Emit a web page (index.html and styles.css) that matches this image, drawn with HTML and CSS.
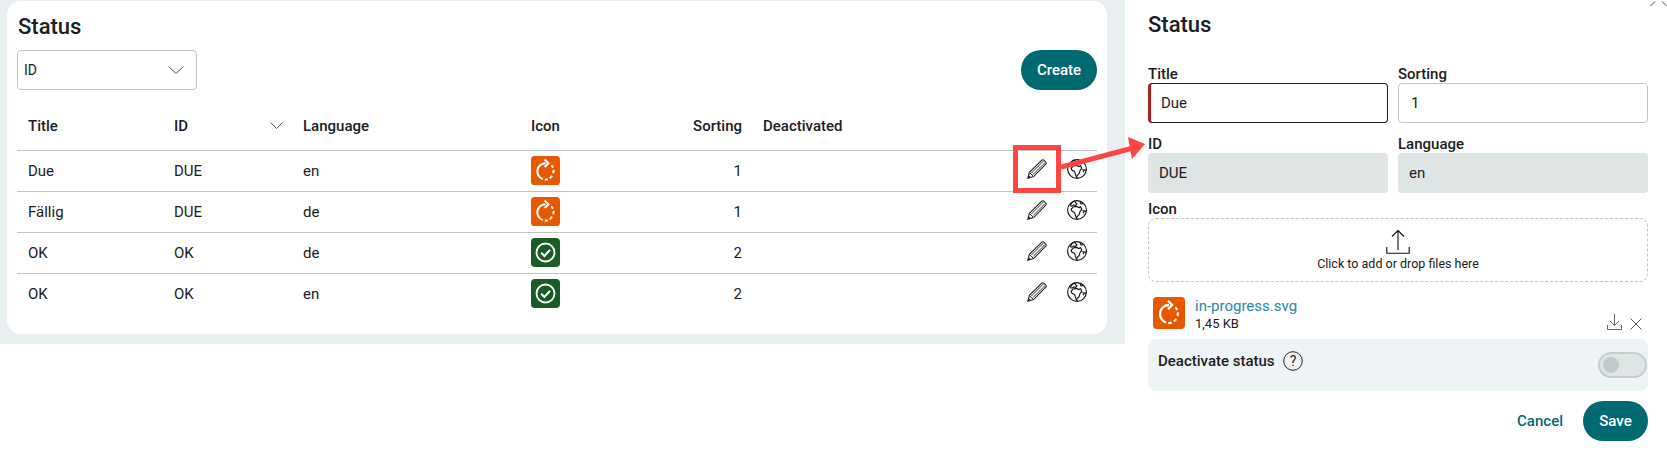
FILE: index.html
```html
<!DOCTYPE html>
<html lang="en">
<head>
<meta charset="utf-8">
<title>Status</title>
<link rel="stylesheet" href="styles.css">
</head>
<body>
<svg class="defs" width="0" height="0" aria-hidden="true">
  <defs>
    <symbol id="i-progress" viewBox="0 0 32 32">
      <rect width="32" height="32" rx="4" fill="#e85800"/>
      <path d="M16 8a9 9 0 0 0-3 17.500" fill="none" stroke="#fff" stroke-width="2.300"/>
      <path d="M15.200 26a9 9 0 0 0 3.400-.4M20.800 24.400a9 9 0 0 0 2.400-2.600M24.500 19a9 9 0 0 0 .4-3.600M24.300 13a9 9 0 0 0-1.900-2.700" fill="none" stroke="#fff" stroke-width="2.300"/>
      <path d="M15 3.800l4.200 4.200-4.200 4.200" fill="none" stroke="#fff" stroke-width="2.300"/>
    </symbol>
    <symbol id="i-ok" viewBox="0 0 29 29">
      <rect width="29" height="29" rx="4" fill="#1a5c25"/>
      <circle cx="14.500" cy="14.500" r="9" fill="none" stroke="#fff" stroke-width="1.800"/>
      <path d="M10.200 14.800l3.200 3.200 5.600-6.200" fill="none" stroke="#fff" stroke-width="2"/>
    </symbol>
    <symbol id="i-pencil" viewBox="0 0 20 20">
      <path d="M.8 19.200l1.600-5.800L14.800 1.200a1.400 1.400 0 0 1 2 0l2 2a1.400 1.400 0 0 1 0 2L6.600 17.600z" fill="#fff" stroke="#222" stroke-width="1.100"/>
      <path d="M2.400 13.400l4.200 4.200M4.400 14L16.400 2M6 15.600L18 3.600" fill="none" stroke="#333" stroke-width="1"/>
      <path d="M.8 19.200l.8-3.200 2.400 2.400z" fill="#222"/>
    </symbol>
    <symbol id="i-globe" viewBox="0 0 20 20">
      <circle cx="10" cy="10" r="9.400" fill="none" stroke="#111" stroke-width="1.100"/>
      <path d="M7.600 1C5 2 3.800 3.800 3.600 5.800l1.600.4L6.400 5l2.200.4L10 3.800 8.600 2.600z" fill="none" stroke="#111" stroke-width="1.100"/>
      <path d="M6.600 6.800L4.200 9c0 2 1.200 3 3 3.200.8.600.8 2 1.400 3.600.4 1.400 1 2.600 1.800 3.200M6.600 6.800l3-.4 2.200 1.200 1.800-.8 1.200 2.400-1.800 2.400-.8 2.800-1.800 2-1 1.600" fill="none" stroke="#111" stroke-width="1.100"/>
      <path d="M13 2l1 2 2-.4M15.400 10.600l3.800.8M17 13l-1-1" fill="none" stroke="#111" stroke-width="1.100"/>
    </symbol>
  </defs>
</svg>

<main class="page">
  <section class="list-panel">
    <div class="card">
      <h1 class="heading">Status</h1>
      <div class="toolbar">
        <div class="select">
          <span>ID</span>
          <svg class="chev" width="16" height="8" viewBox="0 0 16 8"><path d="M.5.500L8 7.500 15.500.500" fill="none" stroke="#555" stroke-width="1"/></svg>
        </div>
        <button class="btn">Create</button>
      </div>
      <table class="table">
        <colgroup>
          <col class="c-title"><col class="c-id"><col class="c-lang"><col class="c-icon"><col class="c-sort"><col class="c-deact"><col class="c-act">
        </colgroup>
        <thead>
          <tr>
            <th>Title</th>
            <th><div class="sort-head"><span>ID</span><svg width="13" height="7" viewBox="0 0 13 7"><path d="M.5.500l6 6 6-6" fill="none" stroke="#555" stroke-width="1"/></svg></div></th>
            <th>Language</th>
            <th>Icon</th>
            <th class="num">Sorting</th>
            <th>Deactivated</th>
            <th></th>
          </tr>
        </thead>
        <tbody>
          <tr>
            <td>Due</td><td>DUE</td><td>en</td>
            <td><svg class="status-icon"><use href="#i-progress"/></svg></td>
            <td class="num">1</td><td></td>
            <td><div class="actions"><svg class="act"><use href="#i-pencil"/></svg><svg class="act"><use href="#i-globe"/></svg></div></td>
          </tr>
          <tr>
            <td>Fällig</td><td>DUE</td><td>de</td>
            <td><svg class="status-icon"><use href="#i-progress"/></svg></td>
            <td class="num">1</td><td></td>
            <td><div class="actions"><svg class="act"><use href="#i-pencil"/></svg><svg class="act"><use href="#i-globe"/></svg></div></td>
          </tr>
          <tr>
            <td>OK</td><td>OK</td><td>de</td>
            <td><svg class="status-icon"><use href="#i-ok"/></svg></td>
            <td class="num">2</td><td></td>
            <td><div class="actions"><svg class="act"><use href="#i-pencil"/></svg><svg class="act"><use href="#i-globe"/></svg></div></td>
          </tr>
          <tr>
            <td>OK</td><td>OK</td><td>en</td>
            <td><svg class="status-icon"><use href="#i-ok"/></svg></td>
            <td class="num">2</td><td></td>
            <td><div class="actions"><svg class="act"><use href="#i-pencil"/></svg><svg class="act"><use href="#i-globe"/></svg></div></td>
          </tr>
        </tbody>
      </table>
    </div>
  </section>

  <aside class="form-panel">
    <h2 class="heading form-heading">Status</h2>
    <div class="fields">
      <div class="field">
        <div class="label">Title</div>
        <div class="input input-active">Due</div>
      </div>
      <div class="field">
        <div class="label">Sorting</div>
        <div class="input">1</div>
      </div>
      <div class="field">
        <div class="label">ID</div>
        <div class="input input-off">DUE</div>
      </div>
      <div class="field">
        <div class="label">Language</div>
        <div class="input input-off">en</div>
      </div>
    </div>
    <div class="label label-icon">Icon</div>
    <div class="dropzone">
      <svg width="24" height="24" viewBox="0 0 24 24"><path d="M12 .5V20M6 6.500L12 .5l6 6M.8 17v6.200h22.400V17" fill="none" stroke="#111" stroke-width="1.100"/></svg>
      <div class="drop-text">Click to add or drop files here</div>
    </div>
    <div class="file">
      <svg class="file-icon"><use href="#i-progress"/></svg>
      <div class="file-meta">
        <div class="file-name">in-progress.svg</div>
        <div class="file-size">1,45 KB</div>
      </div>
      <div class="file-tools">
        <svg width="15" height="16" viewBox="0 0 15 16"><path d="M7.500 0v11M3 7l4.500 4.500L12 7M.5 11v4.500h14V11" fill="none" stroke="#666" stroke-width="1"/></svg>
        <svg width="12" height="12" viewBox="0 0 12 12"><path d="M.5.500l11 11M11.500.500l-11 11" fill="none" stroke="#555" stroke-width="1"/></svg>
      </div>
    </div>
    <div class="deactivate">
      <div class="deactivate-label">
        <span>Deactivate status</span>
        <svg width="20" height="20" viewBox="0 0 20 20"><circle cx="10" cy="10" r="9.300" fill="none" stroke="#222" stroke-width="1"/><text x="10" y="15" text-anchor="middle" class="help-q">?</text></svg>
      </div>
      <div class="toggle"><div class="knob"></div></div>
    </div>
    <div class="form-actions">
      <span class="link">Cancel</span>
      <button class="btn btn-save">Save</button>
    </div>
  </aside>
</main>

<svg class="close-mark" width="17" height="7" viewBox="0 0 17 7"><path d="M.5 6L5 1.500M12 1.500L16.500 6" fill="none" stroke="#444" stroke-width="1"/></svg>
<div class="callout-box"></div>
<svg class="callout-arrow" width="90" height="36" viewBox="0 0 90 36"><path d="M0 31L72 12" fill="none" stroke="#ff4444" stroke-width="5"/><path d="M84 8L67 1l4 22z" fill="#ff4444"/></svg>
</body>
</html>
```
FILE: styles.css
```css
* { box-sizing: border-box; }
html, body { margin: 0; padding: 0; background: #fff; }
body {
  position: relative;
  width: 1667px;
  height: 450px;
  overflow: hidden;
  font-family: Roboto, "Liberation Sans", sans-serif;
  font-size: 15px;
  color: #1b2023;
}
.defs { position: absolute; }
.page { display: flex; align-items: flex-start; }

.list-panel {
  width: 1125px;
  height: 344px;
  flex: none;
  padding: 1px 18px 0 7px;
  background: #e9eef1;
}
.card {
  height: 333px;
  padding: 12px 10px 0;
  background: #fff;
  border-radius: 14px;
}
.heading {
  margin: 0 0 0 1px;
  font-size: 22px;
  line-height: 28px;
  font-weight: 500;
}
.toolbar {
  display: flex;
  justify-content: space-between;
  margin-top: 9px;
}
.select {
  display: flex;
  align-items: center;
  justify-content: space-between;
  width: 180px;
  height: 40px;
  padding: 0 12px 0 6px;
  border: 1px solid #bcc6c8;
  border-radius: 4px;
  font-size: 14px;
}
.btn {
  height: 40px;
  width: 76px;
  padding: 0;
  border: 0;
  border-radius: 20px;
  background: #006a72;
  color: #fff;
  font: 500 15px Roboto, sans-serif;
}

.table {
  width: 1080px;
  margin-top: 10px;
  border-collapse: collapse;
  table-layout: fixed;
}
.c-title { width: 146px; }
.c-id { width: 129px; }
.c-lang { width: 228px; }
.c-icon { width: 120px; }
.c-sort { width: 112px; }
.c-deact { width: 260px; }
.c-act { width: 85px; }
.table th {
  height: 50px;
  padding: 2px 0 0 11px;
  text-align: left;
  font-weight: 500;
  border-bottom: 1px solid #bcc6c8;
}
.table td {
  height: 41px;
  padding: 0 0 0 11px;
  border-bottom: 1px solid #bcc6c8;
}
.table tbody tr:last-child td { border-bottom: 0; }
.table .num { text-align: right; padding: 0 10px 0 0; }
.table th.num { padding: 2px 10px 0 0; }
.sort-head {
  display: flex;
  align-items: center;
  justify-content: space-between;
  padding-right: 9px;
}
.status-icon { display: block; width: 29px; height: 29px; }
.actions { display: flex; gap: 20px; margin: -4px 0 0 4px; }
.act { display: block; width: 20px; height: 20px; flex: none; }

.form-panel {
  width: 523px;
  flex: none;
  padding: 11px 0 0 23px;
}
.form-heading { margin: 0; }
.fields {
  display: grid;
  grid-template-columns: 240px 250px;
  column-gap: 10px;
  row-gap: 11px;
  margin-top: 25px;
}
.label {
  height: 19px;
  line-height: 21px;
  font-weight: 500;
}
.input {
  display: flex;
  align-items: center;
  height: 40px;
  padding: 0 12px;
  border: 1px solid #bcc6c8;
  border-radius: 4px;
  font-size: 15px;
}
.input-active {
  border: 1px solid #1b2023;
  border-left: 3px solid #b71c1c;
  padding-left: 10px;
}
.input-off {
  border: 0;
  background: #dfe4e4;
  padding: 0 11px;
}
.label-icon { margin-top: 7px; height: 18px; line-height: 18px; }
.dropzone {
  display: flex;
  flex-direction: column;
  align-items: center;
  height: 64px;
  padding-top: 11px;
  border: 1px dashed #bcc6c8;
  border-radius: 8px;
}
.dropzone svg { display: block; }
.drop-text { margin-top: 2px; font-size: 12.5px; line-height: 16px; }
.file {
  display: flex;
  height: 32px;
  margin-top: 15px;
  padding: 0 6px 0 5px;
}
.file-icon { display: block; width: 32px; height: 32px; flex: none; }
.file-meta { flex: 1; margin: 0 0 0 10px; }
.file-name { font-size: 15px; line-height: 19px; color: #2a88a6; }
.file-size { font-size: 13px; line-height: 15px; }
.file-tools { display: flex; align-items: flex-end; gap: 8px; margin-bottom: -1px; }
.file-tools svg { display: block; }
.deactivate {
  display: flex;
  justify-content: space-between;
  height: 52px;
  margin-top: 10px;
  padding: 12px 1px 0 10px;
  background: #eef3f5;
  border-radius: 8px;
}
.deactivate-label {
  display: flex;
  align-items: center;
  gap: 8px;
  height: 19px;
  font-weight: 500;
}
.deactivate-label svg { display: block; }
.help-q { font: 400 14px Roboto, sans-serif; fill: #222; }
.toggle {
  display: flex;
  align-items: center;
  width: 49px;
  height: 26px;
  margin-top: 1px;
  padding-left: 3px;
  background: #dfe4e4;
  border: 2px solid #c5cdcd;
  border-radius: 13px;
}
.knob { width: 16px; height: 16px; border-radius: 50%; background: #c2caca; }
.form-actions {
  display: flex;
  align-items: center;
  justify-content: flex-end;
  gap: 20px;
  width: 500px;
  margin-top: 10px;
}
.link { color: #006a72; font-weight: 500; }
.btn-save { width: 65px; }

.close-mark { position: absolute; left: 1650px; top: 0; }
.callout-box {
  position: absolute;
  left: 1013px;
  top: 145px;
  width: 48px;
  height: 48px;
  border: 5px solid #ff4444;
}
.callout-arrow { position: absolute; left: 1061px; top: 136px; }
```
